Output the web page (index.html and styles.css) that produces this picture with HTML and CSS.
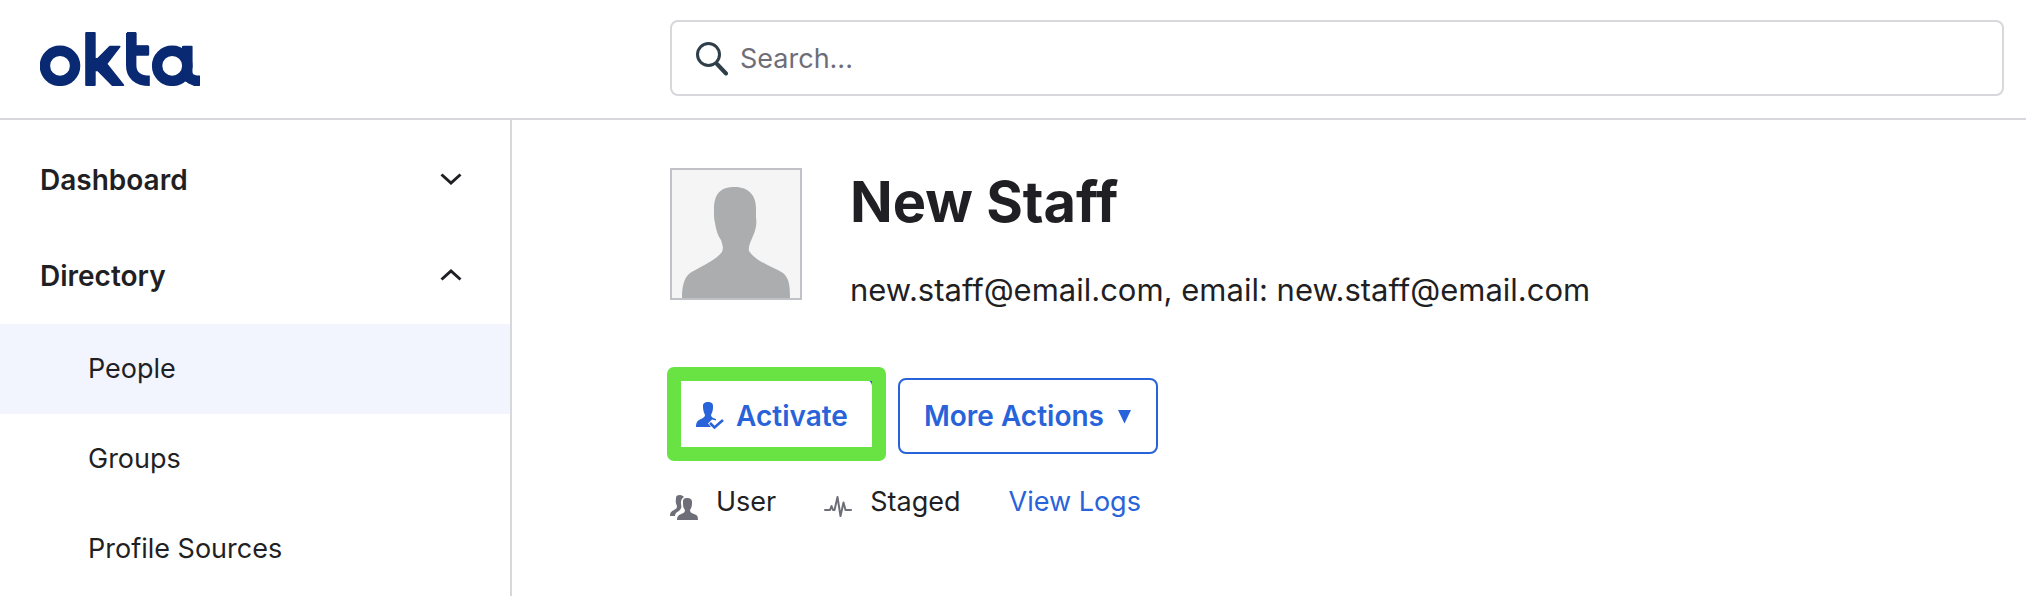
FILE: index.html
```html
<!DOCTYPE html>
<html lang="en">
<head>
<meta charset="utf-8">
<title>New Staff - People</title>
<link rel="stylesheet" href="styles.css">
</head>
<body>
<header class="topbar">
  <a class="brand" href="#" aria-label="okta">
    <svg class="logo" viewBox="0 0 160 54" aria-hidden="true">
      <g fill="none" stroke="currentColor" stroke-width="10.4">
        <circle cx="20" cy="33.8" r="15.1"/>
        <path d="M91.200 1V33.500C91.200 42.500 97 48.800 109.800 48.800M91 18.400H108.400"/>
        <circle cx="132.200" cy="33.800" r="15.100"/>
        <path d="M147.200 14V38.500C147.200 45.500 150.500 48.600 160 48.600"/>
      </g>
      <g fill="currentColor" stroke="currentColor" stroke-width="2" stroke-linejoin="round">
        <path d="M46.200 1H54.700V27L57.800 27 70 14.700H79.500L66.300 31.800 83.200 53H72.500L58 38.200 54.700 38.200V53H46.200Z"/>
        <path d="M87 1H95.400V14.700H108.200V22.600H95.400"/>
        <path d="M143.200 14.700H151.300V36M140 46L147 49 154 53H159V44.600"/>
      </g>
    </svg>
  </a>
  <label class="search">
    <svg class="search-icon" viewBox="0 0 32 34" aria-hidden="true"><g fill="none" stroke="currentColor" stroke-linecap="round"><circle cx="12.500" cy="12.500" r="11" stroke-width="3"/><path d="M21 22L30 31.500" stroke-width="4"/></g></svg>
    <input class="search-input" type="text" placeholder="Search..." aria-label="Search">
  </label>
</header>
<div class="layout">
  <nav class="sidebar">
    <button class="section" type="button">Dashboard
      <svg class="chevron" viewBox="0 0 22 12" aria-hidden="true"><path d="M1.500 1.500L11 10 20.500 1.500"/></svg>
    </button>
    <button class="section" type="button" aria-expanded="true">Directory
      <svg class="chevron" viewBox="0 0 22 12" aria-hidden="true"><path d="M1.500 10.500L11 2 20.500 10.500"/></svg>
    </button>
    <a class="item item-current" href="#">People</a>
    <a class="item" href="#">Groups</a>
    <a class="item" href="#">Profile Sources</a>
  </nav>
  <main class="content">
    <section class="profile">
      <svg class="avatar" viewBox="0 0 128 128" aria-hidden="true"><path fill="#acadae" d="M10 128C10 116 12 108 18 103C26 98 43 91 50 82C52 77 50 74 49 70C46 66 44 60 43 53C42 50 42 46 42 40C42 24 48 17 63 17C77 17 84 26 84 38V48C85 52 84 60 81 66C79 71 76 76 77 81C83 91 101 97 111 103C117 108 118 115 118 128Z"/></svg>
      <div>
        <h1 class="name">New Staff</h1>
        <p class="email">new.staff@email.com, email: new.staff@email.com</p>
      </div>
    </section>
    <div class="actions">
      <div class="spotlight">
        <button class="button" type="button">
          <svg class="icon" viewBox="0 0 28 28" aria-hidden="true"><path fill="currentColor" d="M0 25C0 20 2 18 5 17C8 15.500 9 14.500 9 13C7 9 7 6 7 4C7 1 9 0 12 0C15 0 17 1 17 4C17 7 17 9 15 13C15 15 17 16 20 17L20 18.500L16 17.500L12 21.500L15 25Z"/><path fill="none" stroke="currentColor" stroke-width="2.600" d="M14 21L18.500 25.500L27 18"/></svg>
          Activate
        </button>
      </div>
      <button class="button button-menu" type="button">More Actions
        <svg class="caret" viewBox="0 0 14 14" aria-hidden="true"><path fill="currentColor" d="M0 0H13L6.500 13.500Z"/></svg>
      </button>
    </div>
    <div class="meta">
      <span class="fact"><svg class="icon" viewBox="0 0 28 28" aria-hidden="true"><g fill="currentColor"><path d="M0 23C0 19 2 18 4 17C6 16 7 15 7 13C5 9 6 7 6 5C6 3 7 2 10 2C12 2 13 3 14 4C11 6 11 8 11 11C12 14 11 16 9 18C6 19 5 21 5 23Z"/><path d="M7 27C7 23 9 22 11 21C14 20 15 19 15 17C13 15 13 12 13 9C13 6 14 5 17 5C20 5 22 6 22 9C22 12 22 14 20 17C20 19 21 20 24 21C27 22 28 23 28 27Z"/></g></svg>User</span>
      <span class="fact"><svg class="icon" viewBox="0 0 28 28" aria-hidden="true"><path fill="none" stroke="currentColor" stroke-width="2" stroke-linecap="round" stroke-linejoin="round" d="M1 17H6L7.500 13L9 17H10.500L13.500 4L16.500 23L19.500 9.500L21.500 17H27"/></svg>Staged</span>
      <a class="logs" href="#">View Logs</a>
    </div>
  </main>
</div>
</body>
</html>
```
FILE: styles.css
```css
* {
  box-sizing: border-box;
}

body {
  margin: 0;
  min-height: 100vh;
  display: flex;
  flex-direction: column;
  background: #fff;
  color: #1f1f24;
  font: 27px/36px Inter, "Liberation Sans", sans-serif;
}

button,
input {
  font: inherit;
  color: inherit;
}

a {
  color: inherit;
  text-decoration: none;
}

svg {
  flex: none;
  display: block;
}

.topbar {
  display: grid;
  grid-template-columns: 630px 1fr;
  align-items: center;
  padding: 20px 22px 22px 40px;
  border-bottom: 2px solid #d7d7dc;
}

.brand {
  padding-top: 2px;
  color: #0a2973;
}

.logo {
  width: 160px;
  height: 54px;
}

.search {
  display: flex;
  align-items: center;
  gap: 12px;
  padding: 19px 24px 17px;
  border: 2px solid #d7d7dc;
  border-radius: 8px;
}

.search-icon {
  width: 32px;
  height: 34px;
  color: #2f3f4a;
}

.search-input {
  flex: 1;
  min-width: 0;
  height: 36px;
  padding: 0;
  border: 0;
  outline: 0;
  background: none;
}

.search-input::placeholder {
  color: #6e6e78;
  opacity: 1;
}

.layout {
  flex: 1;
  display: grid;
  grid-template-columns: 512px 1fr;
}

.sidebar {
  padding-top: 12px;
  border-right: 2px solid #d7d7dc;
}

.section {
  display: flex;
  align-items: center;
  justify-content: space-between;
  width: 100%;
  padding: 30px 48px 30px 40px;
  border: 0;
  background: none;
  font-size: 28px;
  font-weight: 600;
}

.chevron {
  width: 22px;
  height: 12px;
  margin-bottom: 2px;
  fill: none;
  stroke: currentColor;
  stroke-width: 3px;
}

.item {
  display: block;
  padding: 27px 40px 27px 88px;
}

.item-current {
  background: #f2f5fe;
}

.content {
  padding: 48px 22px 0 158px;
}

.profile {
  display: flex;
  gap: 48px;
}

.avatar {
  width: 132px;
  height: 132px;
  border: 2px solid #c1c1c8;
  background: #f5f5f6;
}

.name {
  margin: 0;
  font-size: 56px;
  line-height: 68px;
  font-weight: 700;
}

.email {
  margin: 34px 0 0;
  font-size: 31px;
  line-height: 40px;
}

.actions {
  display: flex;
  gap: 24px;
  margin-top: 68px;
}

.spotlight {
  position: relative;
}

.spotlight::after {
  content: "";
  position: absolute;
  inset: -11px -12px -7px -3px;
  border: 14px solid #69e344;
  border-radius: 7px;
  pointer-events: none;
}

.button {
  display: flex;
  align-items: center;
  gap: 12px;
  padding: 18px 24px;
  border: 2px solid #2963d9;
  border-radius: 8px;
  background: #fff;
  color: #2963d9;
  font-size: 28px;
  font-weight: 600;
}

.button-menu {
  gap: 14px;
}

.icon {
  width: 28px;
  height: 28px;
}

.caret {
  width: 14px;
  height: 14px;
  margin-top: 2px;
}

.meta {
  display: flex;
  gap: 48px;
  margin-top: 30px;
}

.fact {
  display: flex;
  gap: 18px;
}

.fact .icon {
  margin-top: 9px;
  color: #6e6e78;
}

.logs {
  color: #2963d9;
}
```
